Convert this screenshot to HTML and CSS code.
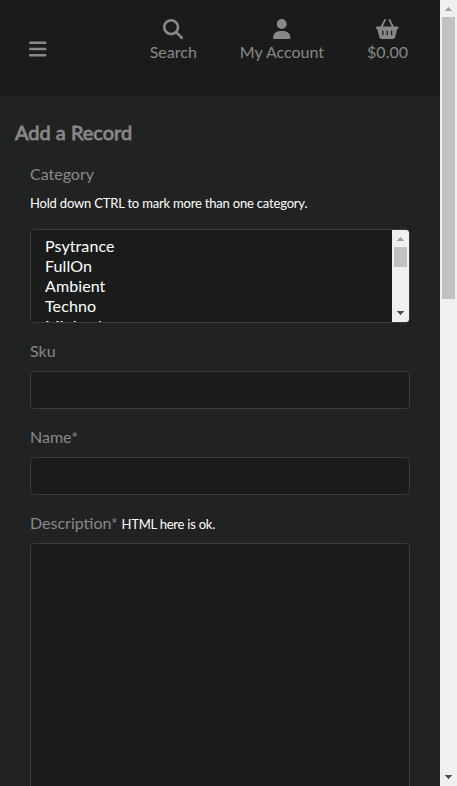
FILE: index.html
```html
<!DOCTYPE html>
<html lang="en">
<head>
<meta charset="utf-8">
<title>Add a Record</title>
<link rel="stylesheet" href="styles.css">
</head>
<body>
<div class="viewport">
  <div class="page">
    <header class="header">
      <a class="menu"><svg class="icon" viewBox="0 0 448 512"><path d="M0 96C0 78.300 14.300 64 32 64H416c17.700 0 32 14.300 32 32s-14.300 32-32 32H32C14.300 128 0 113.700 0 96zM0 256c0-17.700 14.300-32 32-32H416c17.700 0 32 14.300 32 32s-14.300 32-32 32H32c-17.700 0-32-14.300-32-32zM448 416c0 17.700-14.300 32-32 32H32c-17.700 0-32-14.300-32-32s14.300-32 32-32H416c17.700 0 32 14.300 32 32z"/></svg></a>
      <nav class="nav">
        <a class="nav-link"><svg class="icon" viewBox="0 0 512 512"><path d="M416 208c0 45.900-14.900 88.300-40 122.700L502.600 457.400c12.500 12.500 12.500 32.800 0 45.300s-32.800 12.500-45.300 0L330.700 376c-34.400 25.200-76.800 40-122.700 40C93.100 416 0 322.900 0 208S93.100 0 208 0S416 93.100 416 208zM208 352a144 144 0 1 0 0-288 144 144 0 1 0 0 288z"/></svg><span>Search</span></a>
        <a class="nav-link"><svg class="icon" viewBox="0 0 448 512"><path d="M224 256A128 128 0 1 0 224 0a128 128 0 1 0 0 256zm-45.700 48C79.800 304 0 383.800 0 482.300C0 498.700 13.300 512 29.700 512H418.300c16.400 0 29.700-13.300 29.700-29.700C448 383.800 368.200 304 269.700 304H178.300z"/></svg><span>My Account</span></a>
        <a class="nav-link"><svg class="icon" viewBox="0 0 576 512"><path d="M253.300 35.100c6.100-11.800 1.500-26.300-10.200-32.400s-26.300-1.500-32.400 10.200L117.600 192H32c-17.700 0-32 14.300-32 32s14.300 32 32 32L83.900 463.500C91 492 116.600 512 146 512H430c29.400 0 55-20 62.100-48.500L544 256c17.700 0 32-14.300 32-32s-14.300-32-32-32H458.400L365.300 12.900C359.200 1.200 344.700-3.400 332.900 2.700s-16.300 20.600-10.200 32.400L404.300 192H171.700L253.300 35.100zM192 304v96c0 8.800-7.200 16-16 16s-16-7.200-16-16V304c0-8.800 7.200-16 16-16s16 7.200 16 16zm96-16c8.800 0 16 7.200 16 16v96c0 8.800-7.200 16-16 16s-16-7.200-16-16V304c0-8.800 7.200-16 16-16zm128 16v96c0 8.800-7.200 16-16 16s-16-7.200-16-16V304c0-8.800 7.200-16 16-16s16 7.200 16 16z"/></svg><span>$0.00</span></a>
      </nav>
    </header>
    <main class="main">
      <h1 class="title">Add a Record</h1>
      <form class="form">
        <div class="label">Category</div>
        <div class="hint">Hold down CTRL to mark more than one category.</div>
        <div class="box list">
          <ul class="options">
            <li>Psytrance</li>
            <li>FullOn</li>
            <li>Ambient</li>
            <li>Techno</li>
            <li>Minimal</li>
          </ul>
          <div class="scrollbar">
            <svg class="arrow up disabled" viewBox="0 0 7 4" shape-rendering="crispEdges"><path d="M3 0h1v1h1v1h1v1h1v1H0V3h1V2h1V1h1z"/></svg>
            <div class="thumb thumb-list"></div>
            <svg class="arrow down" viewBox="0 0 7 4" shape-rendering="crispEdges"><path d="M0 0h7v1H6v1H5v1H4v1H3V3H2V2H1V1H0z"/></svg>
          </div>
        </div>
        <div class="label">Sku</div>
        <div class="box field"></div>
        <div class="label">Name*</div>
        <div class="box field"></div>
        <div class="label">Description* <small>HTML here is ok.</small></div>
        <div class="box area"></div>
      </form>
    </main>
  </div>
  <div class="scrollbar">
    <svg class="arrow up disabled" viewBox="0 0 7 4" shape-rendering="crispEdges"><path d="M3 0h1v1h1v1h1v1h1v1H0V3h1V2h1V1h1z"/></svg>
    <div class="thumb thumb-page"></div>
    <svg class="arrow down" viewBox="0 0 7 4" shape-rendering="crispEdges"><path d="M0 0h7v1H6v1H5v1H4v1H3V3H2V2H1V1H0z"/></svg>
  </div>
</div>
</body>
</html>
```
FILE: styles.css
```css
* { box-sizing: border-box; }
body {
  margin: 0;
  background: #212322;
  color: #888;
  font: 16px/24px Lato, sans-serif;
}
.viewport {
  display: grid;
  grid-template-columns: 1fr 17px;
  height: 786px;
  overflow: hidden;
}
.page { height: 786px; overflow: hidden; }
.header {
  display: flex;
  align-items: center;
  justify-content: space-between;
  height: 96px;
  padding: 0 32px 0 29px;
  background: #1a1c1b;
}
.icon { display: block; height: 20px; fill: currentColor; }
.menu { padding-top: 1px; }
.nav { display: flex; gap: 43px; align-self: flex-start; padding-top: 18.5px; }
.nav-link { display: flex; flex-direction: column; align-items: center; gap: 1.5px; }
.main { padding: 24px 15px 0; }
.title {
  margin: 0;
  font-size: 20px;
  font-weight: 400;
  line-height: 24px;
  -webkit-text-stroke: 0.8px currentColor;
}
.form { padding: 18px 15px 0; }
.label { height: 24px; margin-bottom: 8px; }
.hint, small { font-size: 13px; letter-spacing: -0.19px; color: #fff; }
small { margin-left: -0.5px; letter-spacing: -0.23px; }
.hint { height: 24px; margin: -3px 0 14px; }
.box {
  margin-bottom: 16px;
  border: 1px solid #3a3c3b;
  border-radius: 4px;
  background: #1a1c1b;
}
.list { display: flex; height: 94px; overflow: hidden; }
.options {
  flex: 1;
  margin: 0;
  padding: 6px 14px;
  list-style: none;
  color: #fff;
  line-height: 20px;
  letter-spacing: 0.1px;
}
.field { height: 38px; }
.area { height: 260px; }
.scrollbar {
  display: flex;
  flex-direction: column;
  align-items: center;
  width: 17px;
  background: #f0f0f0;
}
.arrow { flex: none; width: 7px; height: 4px; fill: #505050; }
.up { margin: 7px 0 6px; }
.down { margin: auto 0 7px; }
.disabled { fill: #a3a3a3; }
.thumb { flex: none; width: 13px; background: #c1c1c1; }
.thumb-list { height: 20px; }
.thumb-page { height: 282px; }
```
